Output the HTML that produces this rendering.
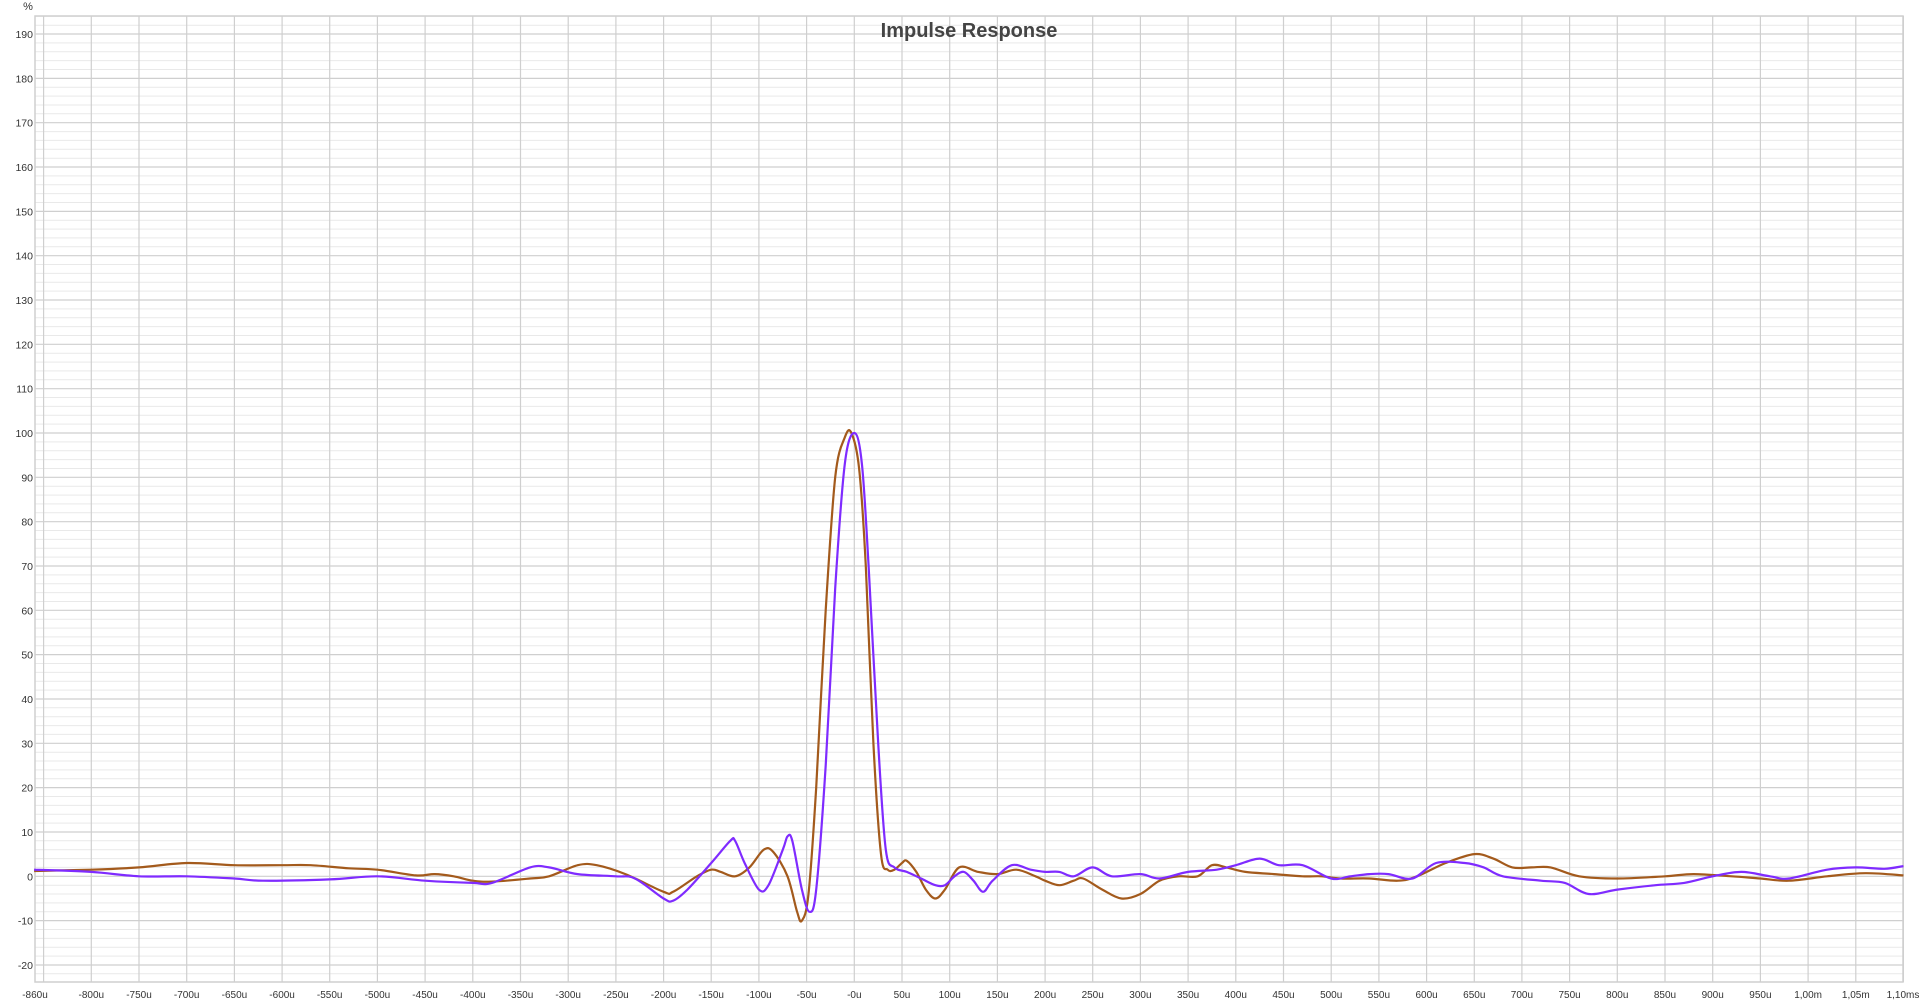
<!DOCTYPE html>
<html><head><meta charset="utf-8"><style>
html,body{margin:0;padding:0;background:#fff;width:1920px;height:1004px;overflow:hidden}
svg{display:block}
text{font-family:"Liberation Sans",sans-serif}
</style></head><body>
<svg id="s" width="1920" height="1004" xmlns="http://www.w3.org/2000/svg"></svg>
<script>
const s=document.getElementById('s');
const L=35,T=16,R=1903,B=982;
const X=t=>91.3+(t+800)*0.95376, Y=v=>876.3-v*4.433;
let h='';
for(let v=-22;v<=194;v+=2){const y=Y(v).toFixed(1);const maj=v%10==0;
h+=`<line x1="${L}" x2="${R}" y1="${y}" y2="${y}" stroke="${maj?'#cfcfcf':'#e9e9e9'}" stroke-width="${maj?1.2:1}"/>`;
if(maj&&v<=190)h+=`<text x="33" y="${(Y(v)+4).toFixed(1)}" font-size="10.5" fill="#333" text-anchor="end">${v}</text>`;}
for(let t=-850;t<=1100;t+=50){const x=X(t).toFixed(1);h+=`<line x1="${x}" x2="${x}" y1="${T}" y2="${B}" stroke="#cfcfcf" stroke-width="1.2"/>`;
if(t>-850&&t<1100){let lab=t<0?t+'u':(t==0?'-0u':(t>=1000?(t/1000).toFixed(2).replace('.',',')+'m':t+'u'));
h+=`<text x="${x}" y="998" font-size="10" fill="#333" text-anchor="middle">${lab}</text>`;}}
h+=`<text x="35" y="998" font-size="10" fill="#333" text-anchor="middle">-860u</text>`;
h+=`<text x="1903" y="998" font-size="10" fill="#333" text-anchor="middle">1,10ms</text>`;
h+=`<rect x="${L}" y="${T}" width="${R-L}" height="${B-T}" fill="none" stroke="#cfcfcf" stroke-width="1.5"/>`;
h+=`<text x="28" y="10" font-size="11" fill="#333" text-anchor="middle">%</text>`;
h+=`<text x="969" y="37" font-size="20" font-weight="bold" fill="#444" text-anchor="middle">Impulse Response</text>`;
function path(d,col){const p=[];for(let i=0;i<d.length;i+=2)p.push([X(d[i]),Y(d[i+1])]);
let o=`M${p[0][0].toFixed(1)},${p[0][1].toFixed(1)}`;
for(let i=0;i<p.length-1;i++){const p0=p[i-1]||p[i],p1=p[i],p2=p[i+1],p3=p[i+2]||p2;
const c1=[p1[0]+(p2[0]-p0[0])/6,p1[1]+(p2[1]-p0[1])/6],c2=[p2[0]-(p3[0]-p1[0])/6,p2[1]-(p3[1]-p1[1])/6];
o+=`C${c1[0].toFixed(1)},${c1[1].toFixed(1)} ${c2[0].toFixed(1)},${c2[1].toFixed(1)} ${p2[0].toFixed(1)},${p2[1].toFixed(1)}`;}
return `<path d="${o}" fill="none" stroke="${col}" stroke-width="2.2" stroke-linejoin="round"/>`;}
const P=[-860,1.5,-800,1,-750,0,-700,0,-650,-0.5,-620,-1,-550,-0.7,-500,0,-450,-1,-400,-1.5,-380,-1.5,-340,2,-320,2,-290,0.5,-250,0,-230,-0.5,-200,-5,-190,-5.5,-175,-3,-150,3,-130,8,-125,8,-115,3,-100,-3,-90,-2,-75,6,-70,9,-65,8,-55,-3,-47,-8,-40,-3,-30,25,-20,65,-10,93,0,100,8,93,15,70,25,30,33,6,42,2,55,1,70,-0.5,85,-2,95,-2,105,0,115,1,125,-1,135,-3.5,145,-1,165,2.5,185,1.5,200,1,215,1,230,0,250,2,270,0,300,0.5,320,-0.5,350,1,380,1.5,400,2.5,425,4,445,2.5,470,2.5,500,-0.5,520,0,540,0.5,560,0.5,585,-0.5,610,3,640,3,660,2,680,0,720,-1,745,-1.5,770,-4,800,-3,840,-2,870,-1.5,900,0,930,1,960,0,980,-0.5,1020,1.5,1050,2,1080,1.7,1100,2.3];
const Bc=[-860,1.2,-800,1.5,-750,2,-700,3,-650,2.5,-600,2.5,-570,2.5,-530,1.8,-500,1.5,-460,0.2,-440,0.5,-420,0,-400,-1,-380,-1.2,-340,-0.5,-320,0,-290,2.5,-270,2.5,-240,0.5,-200,-3.5,-190,-3.5,-165,0,-150,1.5,-140,1,-125,0,-110,2,-95,6,-85,5.5,-70,0,-60,-8,-55,-10,-48,-4,-40,20,-30,60,-20,90,-10,99,-3,100,5,92,12,70,20,30,28,5,35,1.5,42,1.5,50,3,55,3.5,65,1,75,-3,85,-5,95,-3,110,2,130,1,150,0.5,170,1.5,190,0,200,-1,215,-2,230,-1,240,-0.5,260,-3,280,-5,300,-4,320,-1,340,0,360,0,375,2.5,390,2,410,1,440,0.5,470,0,490,0,510,-0.5,540,-0.5,570,-1,590,0,620,3,650,5,670,4,690,2,710,2,730,2,760,0,800,-0.5,850,0,880,0.5,920,0,950,-0.5,980,-1,1020,0,1060,0.7,1100,0.2];
h+=path(Bc,'#a35a1c');h+=path(P,'#7f2bff');
s.innerHTML=h;
</script>
</body></html>
